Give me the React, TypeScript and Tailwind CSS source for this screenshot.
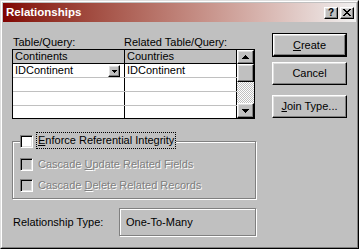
import React from 'react';

const raised =
  'border border-t-white border-l-white border-r-black border-b-black shadow-[inset_-1px_-1px_0_#808080,inset_1px_1px_0_#dfdfdf] bg-[#c0c0c0]';

const etched = 'border border-[#808080] shadow-[inset_1px_1px_0_white,1px_1px_0_white]';

const disabledText = 'text-[#808080] [text-shadow:1px_1px_0_white]';

// pixel triangle, rows widen towards the base
function Tri({ down, w = 7 }: { down?: boolean; w?: number }) {
  const rows = Math.ceil(w / 2);
  const rects = [];
  for (let i = 0; i < rows; i++) {
    const width = 2 * i + 1;
    const y = down ? rows - 1 - i : i;
    rects.push(<rect key={i} x={(w - width) / 2} y={y} width={width} height={1} fill="black" />);
  }
  return (
    <svg width={w} height={rows} viewBox={`0 0 ${w} ${rows}`} shapeRendering="crispEdges">
      {rects}
    </svg>
  );
}

function CloseGlyph() {
  const px = [
    [0, 0], [1, 0], [6, 0], [7, 0],
    [1, 1], [2, 1], [5, 1], [6, 1],
    [2, 2], [3, 2], [4, 2], [5, 2],
    [3, 3], [4, 3],
    [2, 4], [3, 4], [4, 4], [5, 4],
    [1, 5], [2, 5], [5, 5], [6, 5],
    [0, 6], [1, 6], [6, 6], [7, 6],
  ];
  return (
    <svg width="8" height="7" viewBox="0 0 8 7" shapeRendering="crispEdges">
      {px.map(([x, y]) => (
        <rect key={`${x}-${y}`} x={x} y={y} width={1} height={1} fill="black" />
      ))}
    </svg>
  );
}

function Check({ disabled }: { disabled?: boolean }) {
  return (
    <div
      className={`w-[13px] h-[13px] shrink-0 border border-t-[#808080] border-l-[#808080] border-b-white border-r-white shadow-[inset_1px_1px_0_black,inset_-1px_-1px_0_#dfdfdf] ${
        disabled ? 'bg-[#c0c0c0]' : 'bg-white'
      }`}
    />
  );
}

function GridRow({ a, b, last, dropdown }: { a?: string; b?: string; last?: boolean; dropdown?: boolean }) {
  return (
    <div className={`flex bg-white ${last ? 'h-[12px]' : 'h-[14px] border-b border-[#c0c0c0]'}`}>
      <div className="w-[112px] border-r border-black flex items-start pl-[2px] leading-[13px]">
        <span>{a}</span>
        {dropdown && (
          <div className={`ml-auto mr-[4px] mt-px w-[12px] h-[12px] flex items-center justify-center ${raised}`}>
            <Tri down w={5} />
          </div>
        )}
      </div>
      <div className="w-[112px] border-r border-black pl-[2px] leading-[13px]">{b}</div>
    </div>
  );
}

export default function App() {
  return (
    <div className="w-[361px] h-[250px] bg-white overflow-hidden font-['Liberation_Sans',Arial,sans-serif] text-[11px] text-black">
      <div className="w-[359px] h-[249px] border border-t-[#dfdfdf] border-l-[#dfdfdf] border-r-black border-b-black">
        <div className="h-full border border-t-white border-l-white border-r-[#808080] border-b-[#808080] p-px bg-[#c0c0c0]">
          {/* title bar */}
          <div className="h-[19px] flex items-center pl-[3px] pr-[2px] bg-linear-to-r from-[#800000] to-[#f0f0f0]">
            <span className="text-white font-bold text-[11.5px]">Relationships</span>
            <div className="ml-auto flex gap-[2px]">
              <div className={`w-[14px] h-[12px] flex items-center justify-center ${raised}`}>
                <span className="font-bold text-[10px] leading-none">?</span>
              </div>
              <div className={`w-[14px] h-[12px] flex items-center justify-center ${raised}`}>
                <CloseGlyph />
              </div>
            </div>
          </div>

          <div className="flex">
            <div className="ml-[9px] w-[245px]">
              <div className="mt-[14px] h-[13px] leading-[13px] flex">
                <span className="w-[112px] pl-px">Table/Query:</span>
                <span>Related Table/Query:</span>
              </div>

              <div className="w-[243px] h-[70px] border border-black flex">
                <div className="w-[224px] flex flex-col">
                  <div className="flex h-[14px] border-b border-black bg-[#c0c0c0]">
                    <div className="w-[112px] border-r border-black pl-[2px] leading-[13px]">Continents</div>
                    <div className="w-[112px] border-r border-black pl-[2px] leading-[13px]">Countries</div>
                  </div>
                  <GridRow a="IDContinent" b="IDContinent" dropdown />
                  <GridRow />
                  <GridRow />
                  <GridRow last />
                </div>
                <div className="w-[17px] flex flex-col">
                  <div className={`h-[14px] flex items-center justify-center ${raised}`}>
                    <Tri w={7} />
                  </div>
                  <div className={`h-[18px] ${raised}`} />
                  <div className="flex-1 bg-[repeating-conic-gradient(#c0c0c0_0%_25%,#ffffff_0%_50%)] bg-size-[2px_2px]" />
                  <div className={`h-[15px] flex items-center justify-center ${raised}`}>
                    <Tri down w={7} />
                  </div>
                </div>
              </div>

              {/* referential integrity group */}
              <div className={`mt-[22px] w-[244px] pb-[6px] ${etched}`}>
                <div className="-mt-[10px] ml-[7px] w-fit flex items-start bg-[#c0c0c0]">
                  <div className="mt-[3px]">
                    <Check />
                  </div>
                  <span className="ml-[3px] w-[140px] h-[17px] border border-dotted border-black pl-px leading-[15px]">
                    <span className="underline">E</span>nforce Referential Integrity
                  </span>
                </div>
                <div className="mt-[9px] ml-[7px] h-[13px] flex items-center">
                  <Check disabled />
                  <span className={`ml-[5px] ${disabledText}`}>
                    Cascade <span className="underline">U</span>pdate Related Fields
                  </span>
                </div>
                <div className="mt-[8px] ml-[7px] h-[13px] flex items-center">
                  <Check disabled />
                  <span className={`ml-[5px] ${disabledText}`}>
                    Cascade <span className="underline">D</span>elete Related Records
                  </span>
                </div>
              </div>

              <div className="mt-[9px] flex items-center">
                <span className="w-[107px] pl-px">Relationship Type:</span>
                <div className={`w-[137px] h-[28px] flex items-center pl-[6px] ${etched}`}>One-To-Many</div>
              </div>
            </div>

            {/* buttons */}
            <div className="ml-[15px] w-[75px] flex flex-col">
              <div className="mt-[11px] h-[24px] border border-black flex">
                <button className={`flex-1 flex items-center justify-center ${raised}`}>
                  <span className="underline">C</span>reate
                </button>
              </div>
              <button className={`mt-[5px] h-[23px] flex items-center justify-center ${raised}`}>Cancel</button>
              <button className={`mt-[10px] h-[23px] flex items-center justify-center ${raised}`}>
                <span className="underline">J</span>oin Type...
              </button>
            </div>
          </div>
        </div>
      </div>
    </div>
  );
}
